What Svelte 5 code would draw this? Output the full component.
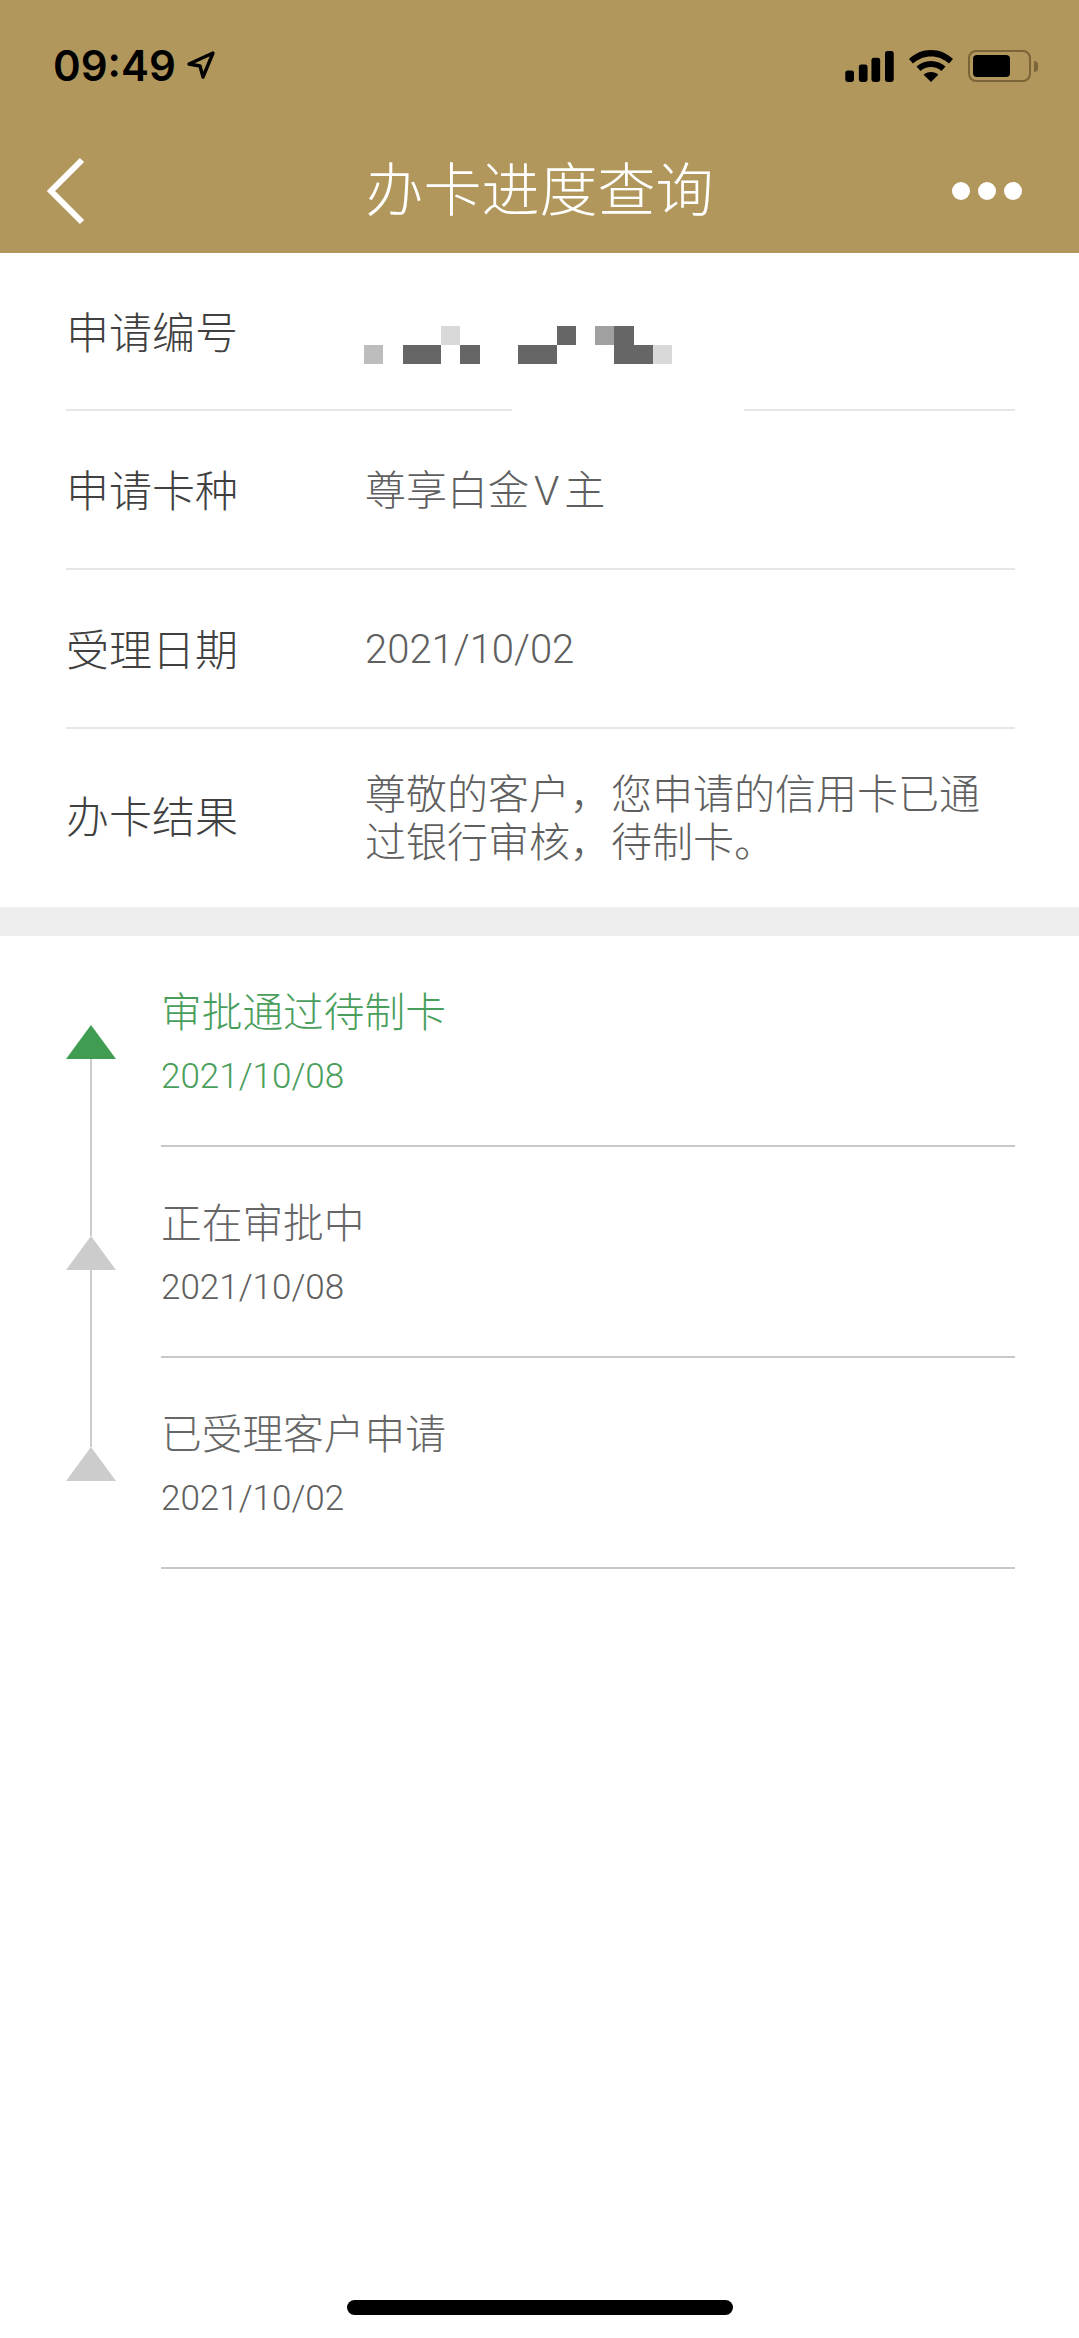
<script>
	const cellColors = { d: '#666', l: '#d9d9d9', m: '#bdbdbd', g: '#a0a0a0' };

	// redacted application number, one string per mosaic row
	const mosaic = [
		'....l.....d.gd...',
		'm.dd.d..dd...ddl.'
	];

	const steps = [
		{ title: '审批通过待制卡', date: '2021/10/08', active: true },
		{ title: '正在审批中', date: '2021/10/08' },
		{ title: '已受理客户申请', date: '2021/10/02' }
	];
</script>

<main class="page">
	<header class="top">
		<div class="status">
			<div class="time">
				<span>09:49</span>
				<svg width="30" height="30" viewBox="0 0 30 30">
					<path d="M27 3 3 14l11 2 3 11z" fill="none" stroke="#000" stroke-width="3.4" stroke-linejoin="round" />
				</svg>
			</div>
			<div class="indicators">
				<svg width="49" height="31" viewBox="0 0 50 32">
					<rect x="0" y="20" width="9" height="12" rx="2.5" />
					<rect x="14" y="14" width="9" height="18" rx="2.5" />
					<rect x="27" y="7" width="9" height="25" rx="2.5" />
					<rect x="41" y="0" width="9" height="32" rx="2.5" />
				</svg>
				<svg width="44" height="32" viewBox="0 0 44 32">
					<path d="M22 0C13.500 0 6 3.300 0 9l4 4.500C9 9 15.300 6.400 22 6.400S35 9 40 13.500L44 9C38 3.300 30.500 0 22 0z" />
					<path d="M22 11c-5.700 0-10.700 2.100-14.500 5.600l4 4.500c2.800-2.500 6.500-4 10.500-4s7.700 1.500 10.500 4l4-4.500C32.700 13.100 27.700 11 22 11z" />
					<path d="M22 22c-3 0-5.500 1-7.300 2.800L22 32l7.300-7.200C27.500 23 25 22 22 22z" />
				</svg>
				<div class="battery">
					<div class="shell"><div class="charge"></div></div>
					<div class="nub"></div>
				</div>
			</div>
		</div>
		<nav class="bar">
			<svg class="back" width="42" height="72" viewBox="0 0 42 72">
				<path d="M37 5 6 36l31 31" fill="none" stroke="#fff" stroke-width="6" />
			</svg>
			<h1>办卡进度查询</h1>
			<div class="more"><i></i><i></i><i></i></div>
		</nav>
	</header>

	<section class="details">
		<div class="row first">
			<div class="label">申请编号</div>
			<div class="mosaic">
				{#each mosaic as line}
					{#each line.split('') as c}
						<span style:background={cellColors[c] ?? 'transparent'}></span>
					{/each}
				{/each}
			</div>
			<div class="gap"></div>
		</div>
		<div class="row">
			<div class="label">申请卡种</div>
			<div class="value">尊享白金<span class="tier">V</span>主</div>
		</div>
		<div class="row">
			<div class="label">受理日期</div>
			<div class="value numeric">2021/10/02</div>
		</div>
		<div class="row result">
			<div class="label">办卡结果</div>
			<div class="value">尊敬的客户，您申请的信用卡已通过银行审核，待制卡。</div>
		</div>
	</section>

	<div class="band"></div>

	<section class="timeline">
		{#each steps as step, i}
			<div class="step" class:active={step.active}>
				<div class="rail">
					{#if i < steps.length - 1}<div class="line"></div>{/if}
					<div class="tri"></div>
				</div>
				<div class="body">
					<div class="title">{step.title}</div>
					<div class="date">{step.date}</div>
				</div>
			</div>
		{/each}
	</section>

	<div class="home"></div>
</main>

<style>
	:global(body) {
		margin: 0;
	}

	.page {
		position: relative;
		width: 1079px;
		height: 2338px;
		background: #fff;
		overflow: hidden;
		font-family: "Roboto", "Noto Sans CJK SC", sans-serif;
		color: #666;
	}

	.top {
		height: 253px;
		background: #b1975c;
	}

	.status {
		height: 132px;
		display: flex;
		justify-content: space-between;
		align-items: flex-start;
		padding: 47px 41px 0 53px;
		box-sizing: border-box;
	}

	.time {
		display: flex;
		align-items: center;
		gap: 10px;
		height: 36px;
		font-family: "Inter", sans-serif;
		font-size: 42px;
		font-weight: 600;
		color: #000;
	}

	.indicators {
		display: flex;
		align-items: center;
		gap: 15px;
		margin-top: 3px;
	}

	.battery {
		display: flex;
		align-items: center;
		gap: 3px;
	}

	.shell {
		width: 53px;
		height: 22px;
		border: 2px solid #7b6536;
		border-radius: 8px;
		padding: 3px;
		box-sizing: content-box;
	}

	.charge {
		width: 37px;
		height: 22px;
		background: #000;
		border-radius: 4px;
	}

	.nub {
		width: 4px;
		height: 11px;
		background: #7b6536;
		border-radius: 0 6px 6px 0;
	}

	.bar {
		display: grid;
		grid-template-columns: 1fr auto 1fr;
		align-items: center;
		height: 70px;
		margin-top: 22px;
		padding: 0 57px;
	}

	.back {
		margin-left: -12px;
		margin-top: 1px;
	}

	h1 {
		margin: -10px 0 0;
		font-family: "Noto Sans CJK SC", sans-serif;
		font-size: 58px;
		line-height: 70px;
		font-weight: 300;
		color: #fff;
	}

	.more {
		display: flex;
		gap: 8px;
		justify-self: end;
	}

	.more i {
		width: 18px;
		height: 18px;
		border-radius: 50%;
		background: #fff;
	}

	.details {
		margin: 0 64px 0 66px;
		height: 654px;
	}

	.row {
		position: relative;
		display: flex;
		align-items: center;
		height: 159px;
		box-sizing: border-box;
		border-bottom: 2px solid #e6e6e6;
	}

	.row.first {
		height: 158px;
	}

	.row.result {
		height: 177px;
		border-bottom: none;
	}

	.label {
		width: 299px;
		flex: none;
		margin-top: -3px;
		font-family: "Noto Sans CJK SC", sans-serif;
		font-size: 43px;
		font-weight: 300;
		color: #404040;
	}

	.result .label {
		margin-top: -7px;
	}

	.value {
		font-size: 41px;
		line-height: 48px;
		font-weight: 300;
		color: #5f5f5f;
		margin-top: 2px;
	}

	.numeric {
		font-size: 40px;
	}

	.tier {
		margin: 0 5px;
	}

	.mosaic {
		display: grid;
		grid-template-columns: repeat(17, 19.250px);
		grid-auto-rows: 19.250px;
		margin-top: 28px;
		margin-left: -1px;
	}

	/* the blur hid part of the divider under the number */
	.gap {
		position: absolute;
		left: 446px;
		bottom: -2px;
		width: 232px;
		height: 2px;
		background: #fff;
	}

	.band {
		height: 29px;
		background: #eee;
	}

	.timeline {
		padding: 0 64px 0 66px;
	}

	.step {
		display: flex;
		height: 211px;
	}

	.rail {
		position: relative;
		width: 95px;
		flex: none;
	}

	.tri {
		position: absolute;
		left: 0;
		top: 89px;
		width: 0;
		height: 0;
		border-left: 25px solid transparent;
		border-right: 25px solid transparent;
		border-bottom: 34px solid #ccc;
	}

	.active .tri {
		border-bottom-color: #3f9c52;
	}

	.line {
		position: absolute;
		left: 24px;
		top: 123px;
		width: 2px;
		height: 177px;
		background: #ccc;
	}

	.body {
		flex: 1;
		border-bottom: 2px solid #c8c8c8;
		box-sizing: border-box;
		padding-top: 50px;
	}

	.title {
		font-size: 40.700px;
		line-height: 48px;
		font-weight: 300;
		font-family: "Noto Sans CJK SC", sans-serif;
	}

	.date {
		margin-top: 21px;
		font-size: 35px;
		line-height: 44px;
		font-weight: 300;
		color: #5f5f5f;
	}

	.active .title,
	.active .date {
		color: #4a9e5c;
	}

	.home {
		position: absolute;
		left: 347px;
		bottom: 23px;
		width: 386px;
		height: 15px;
		border-radius: 8px;
		background: #000;
	}
</style>
